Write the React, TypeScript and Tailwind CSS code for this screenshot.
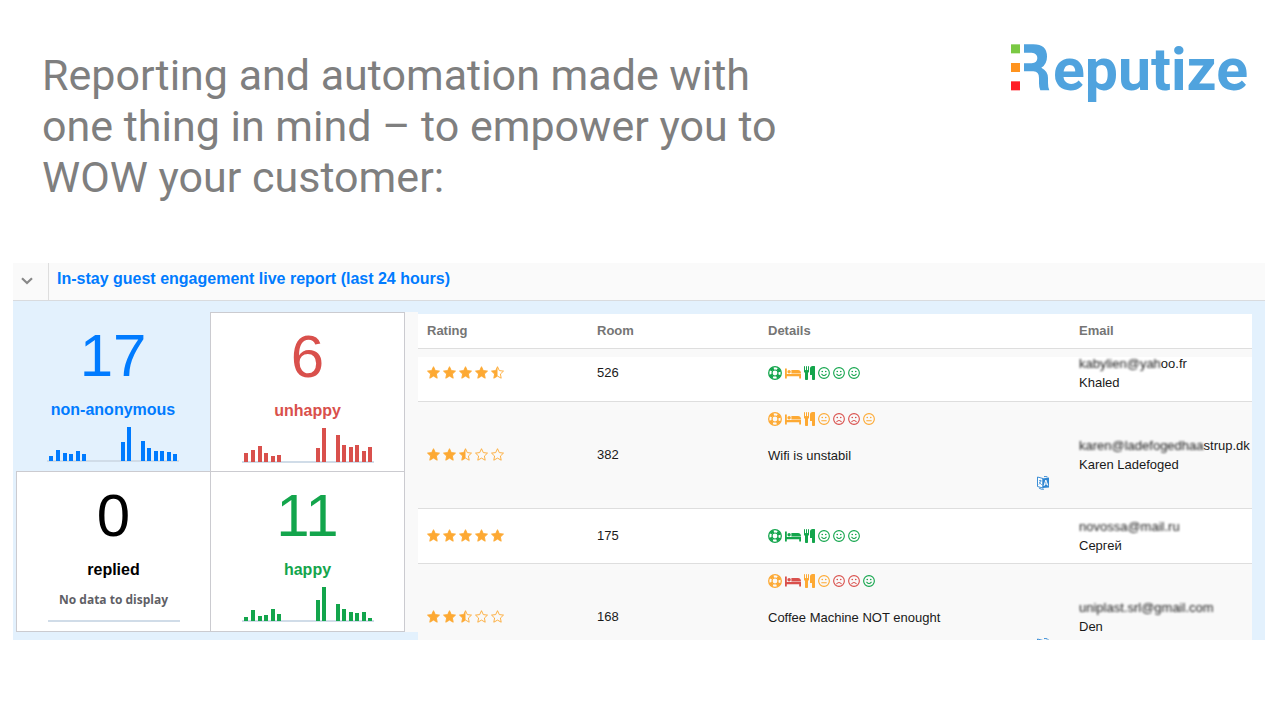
import React from "react";

type Face = "smile" | "meh" | "frown";
type Detail = { icon: "ring" | "bed" | "cutlery" | Face; tone: "good" | "mid" | "bad" };

const toneClass = {
  good: "text-[#13a54c]",
  mid: "text-[#fda933]",
  bad: "text-[#d9504c]",
};

const barX = [2, 9, 16, 22, 29, 35, 74, 80, 94, 100, 107, 113, 120, 126];

const tiles = [
  {
    value: 17,
    label: "non-anonymous",
    className: "text-[#007bff]",
    bars: [5, 11, 8, 7, 10, 7, 19, 34, 20, 13, 10, 10, 9, 7],
  },
  {
    value: 6,
    label: "unhappy",
    className: "bg-white text-[#d9504c] border-t border-l border-r",
    bars: [9, 12, 16, 9, 6, 7, 14, 34, 27, 17, 15, 17, 11, 15],
  },
  {
    value: 0,
    label: "replied",
    className: "bg-white text-black border-t border-l border-b",
    bars: [],
  },
  {
    value: 11,
    label: "happy",
    className: "bg-white text-[#13a54c] border",
    bars: [4, 11, 5, 6, 12, 7, 21, 34, 17, 12, 9, 8, 9, 3],
  },
];

const rows: {
  rating: number;
  room: string;
  details: Detail[];
  comment?: string;
  hidden: string;
  shown: string;
  name: string;
  rowClass: string;
  cellClass: string;
}[] = [
  {
    rating: 4.5,
    room: "526",
    details: [
      { icon: "ring", tone: "good" },
      { icon: "bed", tone: "mid" },
      { icon: "cutlery", tone: "good" },
      { icon: "smile", tone: "good" },
      { icon: "smile", tone: "good" },
      { icon: "smile", tone: "good" },
    ],
    hidden: "kabylien@yah",
    shown: "oo.fr",
    name: "Khaled",
    rowClass: "h-[53px] bg-white",
    cellClass: "pb-1 shadow-[inset_0_8px_0_#f9f9f9]",
  },
  {
    rating: 2.5,
    room: "382",
    details: [
      { icon: "ring", tone: "mid" },
      { icon: "bed", tone: "mid" },
      { icon: "cutlery", tone: "mid" },
      { icon: "meh", tone: "mid" },
      { icon: "frown", tone: "bad" },
      { icon: "frown", tone: "bad" },
      { icon: "meh", tone: "mid" },
    ],
    comment: "Wifi is unstabil",
    hidden: "karen@ladefogedhaa",
    shown: "strup.dk",
    name: "Karen Ladefoged",
    rowClass: "h-[107px] bg-[#f9f9f9]",
    cellClass: "",
  },
  {
    rating: 5,
    room: "175",
    details: [
      { icon: "ring", tone: "good" },
      { icon: "bed", tone: "good" },
      { icon: "cutlery", tone: "good" },
      { icon: "smile", tone: "good" },
      { icon: "smile", tone: "good" },
      { icon: "smile", tone: "good" },
    ],
    hidden: "novossa@mail.ru",
    shown: "",
    name: "Сергей",
    rowClass: "h-[55px] bg-white",
    cellClass: "",
  },
  {
    rating: 2.5,
    room: "168",
    details: [
      { icon: "ring", tone: "mid" },
      { icon: "bed", tone: "bad" },
      { icon: "cutlery", tone: "mid" },
      { icon: "meh", tone: "mid" },
      { icon: "frown", tone: "bad" },
      { icon: "frown", tone: "bad" },
      { icon: "smile", tone: "good" },
    ],
    comment: "Coffee Machine NOT enought",
    hidden: "uniplast.srl@gmail.com",
    shown: "",
    name: "Den",
    rowClass: "h-[107px] bg-[#f9f9f9]",
    cellClass: "",
  },
];

function Logo() {
  return (
    <div className="flex text-[#50a3de]" aria-label="Reputize">
      <svg width="39" height="47" viewBox="33 26 117 141" aria-hidden="true">
        <rect x="33" y="27" width="27" height="27" fill="#7ac943" />
        <rect x="33" y="83" width="27" height="27" fill="#ff931e" />
        <rect x="33" y="138" width="27" height="27" fill="#ff1d25" />
        <path
          fill="currentColor"
          d="M72 27H100Q141 27 141 64Q141 86 124 97Q144 107 144 128V142Q144 158 148 165H121Q117 158 117 144V128Q117 108 100 108H72V84H95Q112 82 112 68Q112 54 95 52H72Z"
        />
      </svg>
      <span className="ml-[3px] text-[59px] leading-[52px] font-bold font-[Roboto,sans-serif]">eputize</span>
    </div>
  );
}

function LifeRing() {
  return (
    <svg width="14" height="14" viewBox="0 0 14 14" fill="none" stroke="currentColor">
      <circle cx="7" cy="7" r="6.300" strokeWidth="1.300" />
      <circle cx="7" cy="7" r="3" strokeWidth="1.200" />
      <circle cx="7" cy="7" r="4.700" strokeWidth="2.800" strokeDasharray="3.690 3.690" strokeDashoffset="-1.845" />
    </svg>
  );
}

function Bed() {
  return (
    <svg width="16" height="14" viewBox="0 0 16 14" fill="currentColor">
      <path d="M0 2.500H1.800V8H16V12.500H14.200V10.300H1.800V12.500H0Z" />
      <circle cx="4.100" cy="5.700" r="1.700" />
      <path d="M6.400 4H13Q16 4.200 16 7.400H6.400Z" />
    </svg>
  );
}

function Cutlery() {
  return (
    <svg width="11" height="14" viewBox="0 64 1408 1792" fill="currentColor">
      <path d="M640 128v640q0 61-35.500 111t-92.500 70v779q0 52-38 90t-90 38h-128q-52 0-90-38t-38-90v-779q-57-20-92.500-70t-35.500-111v-640q0-26 19-45t45-19 45 19 19 45v416q0 26 19 45t45 19 45-19 19-45v-416q0-26 19-45t45-19 45 19 19 45v416q0 26 19 45t45 19 45-19 19-45v-416q0-26 19-45t45-19 45 19 19 45zM1408 128v1600q0 52-38 90t-90 38h-128q-52 0-90-38t-38-90v-512h-224q-13 0-22.500-9.500t-9.500-22.500v-800q0-132 94-226t226-94h256q26 0 45 19t19 45z" />
    </svg>
  );
}

const mouths = {
  smile: "M4 7.800Q6.500 10.800 9 7.800",
  meh: "M4 8.300H9",
  frown: "M4 9.500Q6.500 6.500 9 9.500",
};

function FaceIcon({ kind }: { kind: Face }) {
  return (
    <svg width="12" height="12" viewBox="0 0 13 13" fill="none" stroke="currentColor" strokeLinecap="round">
      <circle cx="6.500" cy="6.500" r="5.800" strokeWidth="1.200" />
      <path d={mouths[kind]} strokeWidth="1.100" />
      <circle cx="4.600" cy="4.900" r="0.900" fill="currentColor" stroke="none" />
      <circle cx="8.400" cy="4.900" r="0.900" fill="currentColor" stroke="none" />
    </svg>
  );
}

function DetailIcon({ icon, tone }: Detail) {
  return (
    <span className={toneClass[tone]}>
      {icon === "ring" && <LifeRing />}
      {icon === "bed" && <Bed />}
      {icon === "cutlery" && <Cutlery />}
      {(icon === "smile" || icon === "meh" || icon === "frown") && <FaceIcon kind={icon} />}
    </span>
  );
}

const starPath =
  "M6.500 .700L8.300 4.600L12.500 5.100L9.400 8L10.200 12.200L6.500 10.100L2.800 12.200L3.600 8L.500 5.100L4.700 4.600Z";

function Star({ fill }: { fill: number }) {
  return (
    <svg width="13" height="13" viewBox="0 0 13 13" fill="none" stroke="currentColor" strokeLinejoin="round">
      <path d={starPath} strokeWidth="0.900" fill={fill === 1 ? "currentColor" : "none"} />
      {fill === 0.5 && <path d="M6.500 .700V10.100L2.800 12.200L3.600 8L.500 5.100L4.700 4.600Z" fill="currentColor" stroke="none" />}
    </svg>
  );
}

function Stars({ rating }: { rating: number }) {
  return (
    <div className="flex gap-[3px] pb-[2px] text-[#fda933]" role="img" aria-label={`${rating} of 5`}>
      {[1, 2, 3, 4, 5].map((n) => (
        <Star key={n} fill={rating >= n ? 1 : rating >= n - 0.5 ? 0.5 : 0} />
      ))}
    </div>
  );
}

function TranslateIcon() {
  return (
    <svg width="14" height="14" viewBox="0 0 14 14" fill="none">
      <path d="M1.500 1L7 2.500V12L1.500 10.500Z" fill="#fff" stroke="#3d8fd6" />
      <path d="M3 4.500L5.800 5M4.400 3.800V5Q4.400 7.500 2.800 8.500M3.200 6.200L5.800 9" stroke="#3d8fd6" strokeWidth="0.800" />
      <path d="M6.500 2.500L13 1.500V11.500L6.500 12Z" fill="#2f86d2" />
      <path d="M8 10L9.800 4L11.800 9.600M8.600 8H11.200" stroke="#fff" />
      <path d="M3 12Q5 13.800 8 13.200M8 .6Q10 .2 11.500 1" stroke="#3d8fd6" />
    </svg>
  );
}

function Spark({ bars }: { bars: number[] }) {
  return (
    <svg width="132" height="36" viewBox="0 0 132 36">
      <rect y="33" width="132" height="2" fill="#d0dce8" />
      {bars.map((h, i) => (
        <rect key={i} x={barX[i]} y={34 - h} width="4" height={h} fill="currentColor" />
      ))}
    </svg>
  );
}

export default function App() {
  return (
    <main className="min-h-screen bg-white font-['Liberation_Sans',Arial,sans-serif] text-[13px] text-[#1a1a1a]">
      <header className="flex items-start justify-between pt-11 pr-8 pl-[42px]">
        <h1 className="mt-[6px] max-w-[760px] text-[43px] leading-[51px] text-[#7f7f7f] font-[Roboto,sans-serif]">
          Reporting and automation made with one thing in mind – to empower you to WOW your customer:
        </h1>
        <Logo />
      </header>

      <section className="mt-[60px] mr-[15px] ml-[13px] bg-[#e3f1fd]">
        <div className="flex h-[38px] border-b border-[#d9dbde] bg-[#fafafa]">
          <button className="flex w-9 items-center justify-center border-r border-[#dedede] pb-[2px] text-[#888]" aria-label="Collapse">
            <svg className="-ml-2" width="12" height="8" viewBox="0 0 12 8" fill="none" stroke="currentColor" strokeWidth="2.200">
              <path d="M1 1.200L6 6L11 1.200" />
            </svg>
          </button>
          <h2 className="ml-2 text-base leading-8 font-bold text-[#007bff]">
            In-stay guest engagement live report (last 24 hours)
          </h2>
        </div>

        <div className="flex max-h-[339px] items-start overflow-hidden pt-[11px]">
          <div className="grid shrink-0 grid-cols-[194px_195px] grid-rows-[159px_161px] border-r-[13px] border-[#f9f9f9] ml-[3px]">
            {tiles.map((t) => (
              <button key={t.label} className={`flex flex-col items-center border-[#cbcbd0] ${t.className}`}>
                <span className="mt-3 text-[60px] leading-[64px]">{t.value}</span>
                <span className="mt-3 text-base leading-5 font-bold">{t.label}</span>
                {t.bars.length > 0 ? (
                  <span className="mt-[7px]">
                    <Spark bars={t.bars} />
                  </span>
                ) : (
                  <span className="mt-3 flex h-[30px] w-[132px] flex-col border-b-2 border-[#d0dce8] text-xs leading-4 font-bold text-[#5f5f66] font-['Open_Sans',sans-serif]">
                    No data to display
                  </span>
                )}
              </button>
            ))}
          </div>

          <table className="mt-[2px] mr-[13px] w-full table-fixed border-separate border-spacing-0 text-left">
            <colgroup>
              <col className="w-[170px]" />
              <col className="w-[171px]" />
              <col />
              <col className="w-[182px]" />
            </colgroup>
            <thead>
              <tr className="h-[35px] bg-white text-[#757575]">
                {["Rating", "Room", "Details", "Email"].map((h) => (
                  <th key={h} className="border-b border-[#dedede] pl-[9px] font-bold">
                    {h}
                  </th>
                ))}
              </tr>
            </thead>
            <tbody className="[&_td]:border-b [&_td]:border-[#dedede] [&_td]:pl-[9px]">
              {rows.map((r) => (
                <tr key={r.room} className={r.rowClass}>
                  <td className={r.cellClass}>
                    <Stars rating={r.rating} />
                  </td>
                  <td className={r.cellClass}>{r.room}</td>
                  <td className={r.comment ? "pt-2 align-top" : r.cellClass}>
                    <div className="flex h-[18px] items-center gap-[3px]">
                      {r.details.map((d, i) => (
                        <DetailIcon key={i} {...d} />
                      ))}
                    </div>
                    {r.comment && (
                      <>
                        <p className="mt-[18px] leading-5">{r.comment}</p>
                        <button className="mt-[10px] mr-5 ml-auto block" aria-label="Translate">
                          <TranslateIcon />
                        </button>
                      </>
                    )}
                  </td>
                  <td className={`leading-[19px] whitespace-nowrap ${r.cellClass}`}>
                    <a href="#" className="block">
                      <span className="inline-block blur-[1px]">{r.hidden}</span>
                      {r.shown}
                    </a>
                    {r.name}
                  </td>
                </tr>
              ))}
            </tbody>
          </table>
        </div>
      </section>
    </main>
  );
}
